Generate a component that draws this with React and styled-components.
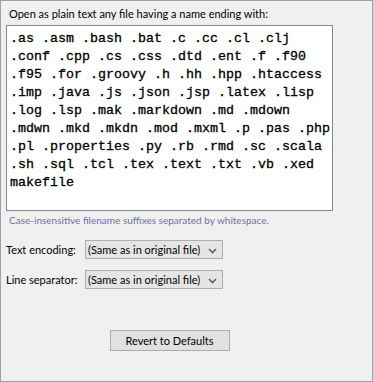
import React from 'react';
import styled, { createGlobalStyle } from 'styled-components';

const GlobalStyle = createGlobalStyle`
	html, body {
		margin: 0;
		padding: 0;
		background: #f0f0f0;
	}
`;

const SUFFIX_LINES = [
	'.as .asm .bash .bat .c .cc .cl .clj',
	'.conf .cpp .cs .css .dtd .ent .f .f90',
	'.f95 .for .groovy .h .hh .hpp .htaccess',
	'.imp .java .js .json .jsp .latex .lisp',
	'.log .lsp .mak .markdown .md .mdown',
	'.mdwn .mkd .mkdn .mod .mxml .p .pas .php',
	'.pl .properties .py .rb .rmd .sc .scala',
	'.sh .sql .tcl .tex .text .txt .vb .xed',
	'makefile',
];

const Chevron = () => (
	<ChevronIcon width='9' height='6' viewBox='0 0 9 6'>
		<path d='M1 1 L4.5 4.5 L8 1' fill='none' stroke='#606060' strokeWidth='1.6' />
	</ChevronIcon>
);

const App = () => {
	return (
		<>
			<GlobalStyle />
			<Panel>
				<Column>
					<Label>Open as plain text any file having a name ending with:</Label>
					<SuffixBox>
						{SUFFIX_LINES.map((line) => (
							<SuffixLine key={line}>{line}</SuffixLine>
						))}
					</SuffixBox>
					<Hint>Case-insensitive filename suffixes separated by whitespace.</Hint>
					<FieldRow $top={12}>
						<FieldLabel>Text encoding:</FieldLabel>
						<Combo>
							<ComboText>(Same as in original file)</ComboText>
							<Chevron />
						</Combo>
					</FieldRow>
					<FieldRow $top={11}>
						<FieldLabel>Line separator:</FieldLabel>
						<Combo>
							<ComboText>(Same as in original file)</ComboText>
							<Chevron />
						</Combo>
					</FieldRow>
					<ButtonRow>
						<Button>Revert to Defaults</Button>
					</ButtonRow>
				</Column>
			</Panel>
		</>
	);
};

const Panel = styled.div`
	box-sizing: border-box;
	width: 373px;
	height: 382px;
	border: 1px solid #a0a0a0;
	background: #f0f0f0;
	padding: 5px 40px 0 5px;
	font-family: Lato, 'Liberation Sans', sans-serif;
	font-size: 11px;
	color: #000;
`;

const Column = styled.div`
	display: flex;
	flex-direction: column;
	width: 327px;
`;

const Label = styled.div`
	margin-left: 3px;
	line-height: 16px;
	margin-bottom: 3px;
`;

const SuffixBox = styled.div`
	box-sizing: border-box;
	height: 186px;
	border: 1px solid #828790;
	background: #fff;
	padding: 4px 3px;
	font-family: 'Liberation Mono', monospace;
	font-size: 13.333px;
	line-height: 18px;
	color: #000;
	-webkit-text-stroke: 0.3px #000;
`;

const SuffixLine = styled.div`
	white-space: pre;
`;

const Hint = styled.div`
	margin: 2px 0 0 3px;
	font-size: 10px;
	line-height: 15px;
	color: #6e6eb4;
`;

const FieldRow = styled.div`
	display: flex;
	align-items: center;
	margin-top: ${(p) => p.$top}px;
`;

const FieldLabel = styled.div`
	width: 79px;
	white-space: nowrap;
`;

const Combo = styled.div`
	box-sizing: border-box;
	width: 138px;
	height: 19px;
	display: flex;
	align-items: center;
	gap: 3px;
	padding: 0 0 0 2px;
	border: 1px solid #adadad;
	background: #e5e5e5;
	white-space: nowrap;
`;

const ComboText = styled.span`
	flex: 1;
	overflow: hidden;
`;

const ChevronIcon = styled.svg`
	flex-shrink: 0;
	margin-right: 5px;
	margin-top: 2px;
`;

const ButtonRow = styled.div`
	display: flex;
	justify-content: center;
	margin-top: 41px;
`;

const Button = styled.button`
	box-sizing: border-box;
	width: 120px;
	height: 21px;
	border: 1px solid #adadad;
	background: #e1e1e1;
	font-family: inherit;
	font-size: 11px;
	color: #000;
	padding: 0;
`;

export default App;
